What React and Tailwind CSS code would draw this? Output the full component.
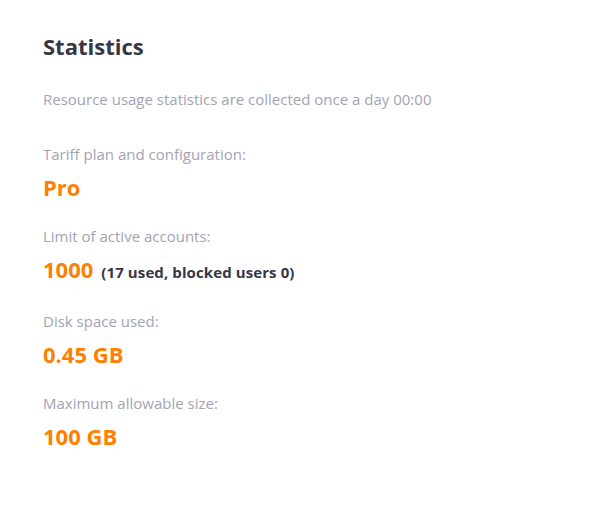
import React from 'react';

const rows = [
  { label: 'Tariff plan and configuration:', value: 'Pro' },
  { label: 'Limit of active accounts:', value: '1000', note: '(17 used, blocked users 0)' },
  { label: 'Disk space used:', value: '0.45 GB' },
  { label: 'Maximum allowable size:', value: '100 GB' }
];

export default function App() {
  return (
    <div
      className="w-[607px] h-[516px] bg-white px-[43px] pt-[32px]"
      style={{ fontFamily: '"Open Sans", "Noto Sans", Arial, sans-serif' }}
    >
      <h1 className="text-[22px] leading-[28px] font-bold text-[#363645]">Statistics</h1>
      <p className="mt-[29px] text-[15px] leading-[20px] text-[#a3a3b3]">
        Resource usage statistics are collected once a day 00:00
      </p>
      <div className="mt-[35px] flex flex-col gap-[25px]">
        {rows.map((row) => (
          <div key={row.label}>
            <div className="text-[15px] leading-[20px] text-[#a3a3b3]">{row.label}</div>
            <div className="mt-[9px] flex items-baseline gap-[8px] leading-[28px]">
              <span className="text-[22px] font-bold text-[#ff7f00]">{row.value}</span>
              {row.note ? (
                <span className="text-[15px] font-bold text-[#363645] tracking-[0.1px]">{row.note}</span>
              ) : null}
            </div>
          </div>
        ))}
      </div>
    </div>
  );
}
